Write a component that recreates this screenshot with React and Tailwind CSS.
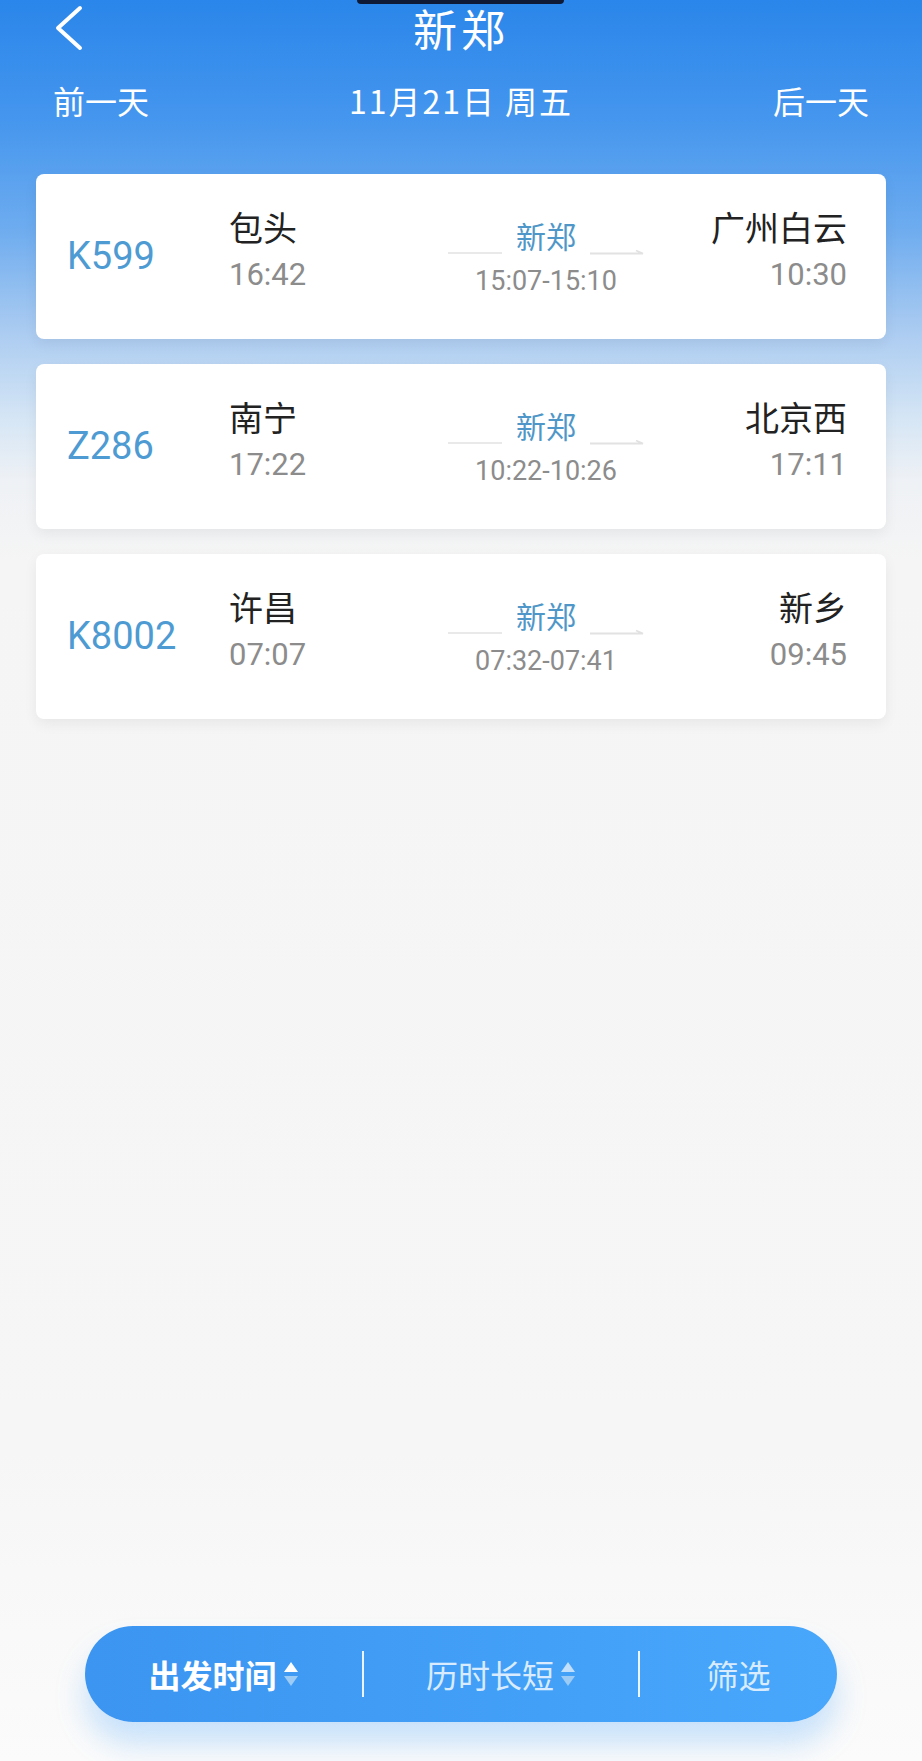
const trains = [
  { no: 'K599', from: '包头', fromTime: '16:42', stop: '15:07-15:10', to: '广州白云', toTime: '10:30' },
  { no: 'Z286', from: '南宁', fromTime: '17:22', stop: '10:22-10:26', to: '北京西', toTime: '17:11' },
  { no: 'K8002', from: '许昌', fromTime: '07:07', stop: '07:32-07:41', to: '新乡', toTime: '09:45' },
];

const SortCaret = ({ top, bottom }) => (
  <svg width="16" height="30" viewBox="0 0 16 30" className="ml-[6px]">
    <path d="M8 3 L15 13 L1 13 Z" fill={top} />
    <path d="M1 17 L15 17 L8 27 Z" fill={bottom} />
  </svg>
);

const TrainCard = ({ t }) => (
  <div className="flex items-start h-[165px] bg-white rounded-[8px] pl-[31px] pr-[39px] shadow-[0_5px_14px_rgba(0,0,0,0.06)]">
    <div className="w-[162px] mt-[60px] text-[38px] leading-[44px] text-[#4d9bd2]">{t.no}</div>

    <div className="w-[207px] mt-[37px]">
      <p className="text-[34px] leading-[36px] text-[#222]">{t.from}</p>
      <p className="mt-[10px] text-[31px] leading-[36px] text-[#8c8c8c]">{t.fromTime}</p>
    </div>

    <div className="w-[220px] mt-[47px] flex flex-col items-center">
      <div className="flex items-end">
        <div className="w-[54px] h-[2px] mb-[1px] bg-[#e9e9e9]" />
        <p className="mx-[14px] text-[30px] leading-[34px] text-[#4f97c8]">新郑</p>
        <svg width="54" height="8" viewBox="0 0 54 8">
          <path d="M0 6.5 H53 L46 3.5" fill="none" stroke="#e2e2e2" strokeWidth="1.8" />
        </svg>
      </div>
      <p className="mt-[10px] text-[27px] leading-[32px] text-[#8c8c8c]">{t.stop}</p>
    </div>

    <div className="flex-1 mt-[37px] text-right">
      <p className="text-[34px] leading-[36px] text-[#222]">{t.to}</p>
      <p className="mt-[10px] text-[31px] leading-[36px] text-[#8c8c8c]">{t.toTime}</p>
    </div>
  </div>
);

export default function App() {
  return (
    <div className="relative flex flex-col h-[1761px] w-full overflow-hidden font-['Roboto','Noto_Sans_CJK_SC',sans-serif] bg-[linear-gradient(to_bottom,#2a86ea_0px,#4596ee_120px,#6eacef_230px,#aacbf1_330px,#d6e6f5_420px,#eef1f5_480px,#f5f5f5_560px,#f6f6f6_1450px,#fbfbfb_100%)]">
      {/* camera notch */}
      <div className="absolute top-0 left-[357px] w-[207px] h-[4px] bg-[#0e1a36] rounded-b-[6px]" />

      <div className="relative h-[56px] flex items-center justify-center">
        <svg width="34" height="48" viewBox="0 0 34 48" className="absolute left-[52px] top-[4px]">
          <path d="M28 4 L6 24 L28 44" fill="none" stroke="#fff" strokeWidth="4" strokeLinecap="round" strokeLinejoin="round" />
        </svg>
        <h1 className="text-[44px] leading-[56px] tracking-[4px] text-white font-['Noto_Sans_CJK_SC',sans-serif]">新郑</h1>
      </div>

      <div className="mt-[24px] h-[40px] px-[53px] flex items-center justify-between text-[32px] text-white font-['Noto_Sans_CJK_SC',sans-serif]">
        <span>前一天</span>
        <span className="tracking-[2px]">11月21日 周五</span>
        <span>后一天</span>
      </div>

      <div className="mt-[54px] px-[36px] flex flex-col gap-[25px]">
        {trains.map((t) => (
          <TrainCard key={t.no} t={t} />
        ))}
      </div>

      <div className="mt-auto mb-[39px] mx-[85px] h-[96px] rounded-full flex items-center bg-[linear-gradient(to_right,#3b95f1,#48a7fb)] shadow-[0_22px_30px_rgba(70,160,250,0.28)] font-['Noto_Sans_CJK_SC',sans-serif]">
        <div className="w-[277px] flex items-center justify-center">
          <span className="text-[32px] font-bold text-white">出发时间</span>
          <SortCaret top="#ffffff" bottom="#9ccbf6" />
        </div>
        <div className="w-[2px] h-[46px] bg-white/90" />
        <div className="w-[274px] flex items-center justify-center">
          <span className="text-[32px] text-[#d9ecff]">历时长短</span>
          <SortCaret top="#c2e0fb" bottom="#9ccbf6" />
        </div>
        <div className="w-[2px] h-[46px] bg-white/90" />
        <div className="flex-1 flex items-center justify-center">
          <span className="text-[32px] text-[#d9ecff]">筛选</span>
        </div>
      </div>
    </div>
  );
}
